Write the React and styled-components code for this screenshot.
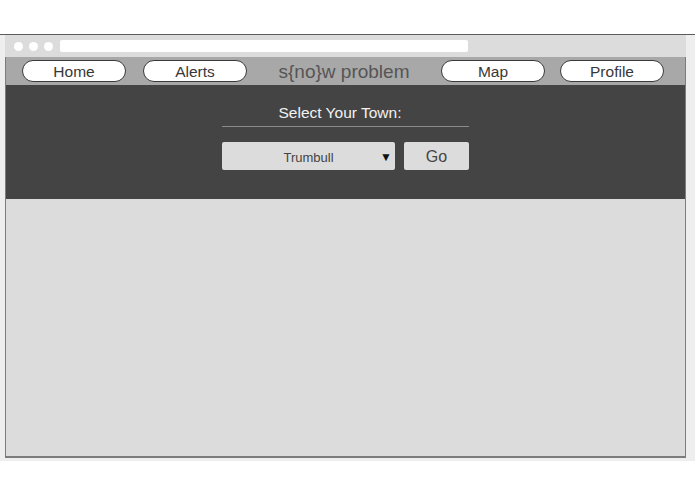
import React from "react";
import styled, { createGlobalStyle } from "styled-components";

const Global = createGlobalStyle`
  html, body { margin: 0; padding: 0; background: #ffffff; }
  body { font-family: "Liberation Sans", Arial, sans-serif; }
`;

const Page = styled.div`
  padding-top: 34px;
`;

const Frame = styled.div`
  border-top: 1px solid #5c5c5c;
  background: #eeeeee;
  padding: 0 9px 3px 5px;
`;

const Window = styled.div`
  background: #dcdcdc;
  display: flex;
  flex-direction: column;
`;

const Chrome = styled.div`
  height: 22px;
  display: flex;
  align-items: center;
  padding-left: 9px;
  gap: 6px;
`;

const Dot = styled.span`
  width: 9px;
  height: 9px;
  border-radius: 50%;
  background: #ffffff;
`;

const Address = styled.div`
  margin-left: 1px;
  width: 408px;
  height: 12px;
  background: #ffffff;
  border-radius: 2px;
`;

const Viewport = styled.div`
  border: 1px solid #7c7c7c;
  border-bottom-width: 2px;
  border-top: none;
  height: 399px;
  display: flex;
  flex-direction: column;
`;

const Nav = styled.nav`
  height: 28px;
  background: #a8a8a8;
  display: flex;
  align-items: center;
  padding: 0 21px 0 16px;
  box-sizing: border-box;
`;

const Pill = styled.button`
  width: 104px;
  height: 22px;
  box-sizing: border-box;
  background: #ffffff;
  border: 1px solid #3a3a3a;
  border-radius: 11px;
  font-family: "Liberation Sans", Arial, sans-serif;
  font-size: 15.5px;
  color: #383838;
  padding: 1px 0 0;
  margin-left: ${(p) => p.$gap || 0}px;
  line-height: 20px;
`;

const Brand = styled.div`
  flex: 1;
  text-align: center;
  font-size: 19px;
  color: #555555;
  padding-top: 2px;
`;

const Hero = styled.section`
  height: 114px;
  background: #444444;
  display: flex;
  justify-content: center;
  padding-top: 18px;
  box-sizing: border-box;
`;

const Column = styled.div`
  width: 247px;
  display: flex;
  flex-direction: column;
`;

const Label = styled.div`
  color: #f2f2f2;
  font-size: 15.5px;
  line-height: 19px;
  text-align: center;
  padding: 0 11px 4px 0;
  border-bottom: 1px solid #8a8a8a;
`;

const Row = styled.div`
  margin-top: 15px;
  display: flex;
  gap: 9px;
`;

const Select = styled.div`
  width: 173px;
  height: 28px;
  background: #dcdcdc;
  border-radius: 2px;
  position: relative;
  display: flex;
  align-items: center;
  justify-content: center;
  font-size: 13px;
  color: #444444;
  padding-top: 2px;
  box-sizing: border-box;
`;

const Arrow = styled.span`
  position: absolute;
  right: 3px;
  top: 8px;
  font-size: 12px;
  color: #111111;
`;

const Go = styled.button`
  width: 65px;
  height: 28px;
  background: #dcdcdc;
  border: none;
  border-radius: 2px;
  font-family: "Liberation Sans", Arial, sans-serif;
  font-size: 16px;
  color: #444444;
  padding: 1px 0 0;
`;

const Body = styled.main`
  flex: 1;
  background: #dcdcdc;
`;

export default function App() {
  return (
    <Page>
      <Global />
      <Frame>
        <Window>
          <Chrome>
            <Dot />
            <Dot />
            <Dot />
            <Address />
          </Chrome>
          <Viewport>
            <Nav>
              <Pill>Home</Pill>
              <Pill $gap={17}>Alerts</Pill>
              <Brand>s{"{"}no{"}"}w problem</Brand>
              <Pill>Map</Pill>
              <Pill $gap={15}>Profile</Pill>
            </Nav>
            <Hero>
              <Column>
                <Label>Select Your Town:</Label>
                <Row>
                  <Select>
                    Trumbull
                    <Arrow>▼</Arrow>
                  </Select>
                  <Go>Go</Go>
                </Row>
              </Column>
            </Hero>
            <Body />
          </Viewport>
        </Window>
      </Frame>
    </Page>
  );
}
